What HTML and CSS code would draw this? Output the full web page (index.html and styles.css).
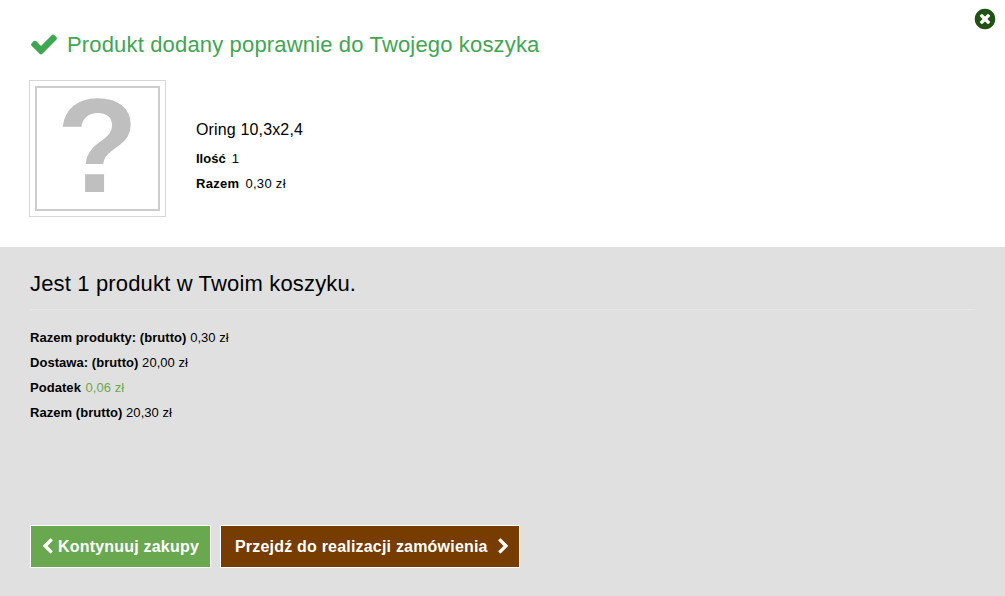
FILE: index.html
```html
<!DOCTYPE html>
<html>
	<head>
		<title>Produkt dodany</title>
		<meta charset="utf-8">
		<link rel="stylesheet" href="styles.css">
	</head>
	<body>
		<a class="closeBtn" href="#">
			<svg viewBox="0 0 1792 1792" width="24" height="24"><path d="M1277 1122q0-26-19-45l-181-181 181-181q19-19 19-45 0-27-19-46l-90-90q-19-19-46-19-26 0-45 19l-181 181-181-181q-19-19-45-19-27 0-46 19l-90 90q-19 19-19 46 0 26 19 45l181 181-181 181q-19 19-19 45 0 27 19 46l90 90q19 19 46 19 26 0 45-19l181-181 181 181q19 19 45 19 27 0 46-19l90-90q19-19 19-46zm387-226q0 209-103 385.5t-279.5 279.5-385.5 103-385.5-103-279.5-279.5-103-385.5 103-385.5 279.5-279.5 385.5-103 385.5 103 279.5 279.5 103 385.5z"/></svg>
		</a>
		<div class="topPanel">
			<h1 class="addedTitle">
				<svg viewBox="0 0 1792 1792" width="30" height="30"><path d="M1671 566q0 40-28 68l-724 724-136 136q-28 28-68 28t-68-28l-136-136-362-362q-28-28-28-68t28-68l136-136q28-28 68-28t68 28l294 295 656-657q28-28 68-28t68 28l136 136q28 28 28 68z"/></svg>
				Produkt dodany poprawnie do Twojego koszyka
			</h1>
			<div class="productRow">
				<div class="thumb"><div class="thumbInner">?</div></div>
				<div class="productInfo">
					<p class="productName">Oring 10,3x2,4</p>
					<p class="productLine"><strong>Ilość</strong><span class="qty">1</span></p>
					<p class="productLine productTotal"><strong>Razem</strong><span>0,30 zł</span></p>
				</div>
			</div>
		</div>
		<div class="bottomPanel">
			<h2 class="cartTitle">Jest 1 produkt w Twoim koszyku.</h2>
			<div class="totals">
				<p><strong>Razem produkty: (brutto)</strong> 0,30 zł</p>
				<p><strong>Dostawa: (brutto)</strong> 20,00 zł</p>
				<p><strong>Podatek</strong> <span class="tax">0,06 zł</span></p>
				<p><strong>Razem (brutto)</strong> 20,30 zł</p>
			</div>
			<div class="buttons">
				<a class="button buttonGreen" href="#">
					<svg viewBox="0 0 1792 1792" width="17" height="17"><path d="M1427 301l-531 531 531 531q19 19 19 45t-19 45l-166 166q-19 19-45 19t-45-19l-742-742q-19-19-19-45t19-45l742-742q19-19 45-19t45 19l166 166q19 19 19 45t-19 45z"/></svg>
					Kontynuuj zakupy
				</a>
				<a class="button buttonBrown" href="#">
					Przejdź do realizacji zamówienia
					<svg viewBox="0 0 1792 1792" width="17" height="17"><path d="M1363 877l-742 742q-19 19-45 19t-45-19l-166-166q-19-19-19-45t19-45l531-531-531-531q-19-19-19-45t19-45l166-166q19-19 45-19t45 19l742 742q19 19 19 45t-19 45z"/></svg>
				</a>
			</div>
		</div>
	</body>
</html>
```
FILE: styles.css
```css
html, body{margin: 0; padding: 0; height: 100%;}
body{font-family: "Liberation Sans", Arial, sans-serif; color: #000; background: #fff; display: flex; flex-direction: column; overflow: hidden;}
p{margin: 0;}

.closeBtn{position: absolute; top: 7px; right: 8px; width: 24px; height: 24px; display: block;}
.closeBtn svg{display: block; fill: #215214;}

.topPanel{height: 247px; box-sizing: border-box; padding: 30px 30px 0 29px;}
.addedTitle{margin: 0 0 21px 0; height: 29px; display: flex; align-items: center; gap: 8px; font-size: 22px; font-weight: normal; letter-spacing: 0.16px; color: #3fa652;}
.addedTitle svg{fill: #3fa652; flex: none; margin-top: -1px;}

.productRow{display: flex; align-items: center;}
.thumb{width: 137px; height: 137px; box-sizing: border-box; border: 1px solid #d6d6d6; padding: 5px; background: #fff;}
.thumbInner{height: 100%; box-sizing: border-box; border: 2px solid #cdcdcd; padding-bottom: 6px; display: flex; align-items: center; justify-content: center; font-size: 134px; line-height: 1; font-weight: bold; color: #bfbfbf;}
.productInfo{margin-left: 30px; padding-top: 24px;}
.productName{font-size: 16px; line-height: 20px; letter-spacing: 0.15px; margin-bottom: 11px;}
.productLine{font-size: 13px; line-height: 15px; margin-bottom: 10px; display: flex; gap: 6px;}
.productTotal{letter-spacing: 0.3px;}

.bottomPanel{flex: 1; background: #e0e0e0; padding: 24px 30px 0;}
.cartTitle{margin: 0; font-size: 22px; font-weight: normal; letter-spacing: 0.16px; line-height: 26px; padding-bottom: 12px; border-bottom: 1px solid #e8e8e8;}
.totals{margin-top: 20px; font-size: 13px; letter-spacing: 0.05px;}
.totals p{line-height: 15px; margin-bottom: 10px;}
.tax{color: #6aa84f; margin-left: 1px;}

.buttons{display: flex; gap: 9px; margin-top: 105px;}
.button{display: flex; align-items: center; height: 43px; box-sizing: border-box; border: 1px solid #fff; color: #fff; text-decoration: none; font-size: 16px; font-weight: bold; letter-spacing: 0.2px;}
.button svg{fill: #fff; flex: none;}
.buttonGreen{background-color: #6aa84f; width: 181px; padding-left: 8px; gap: 2px;}
.buttonBrown{background-color: #763c00; width: 300px; padding-left: 14px; gap: 7px;}
```
